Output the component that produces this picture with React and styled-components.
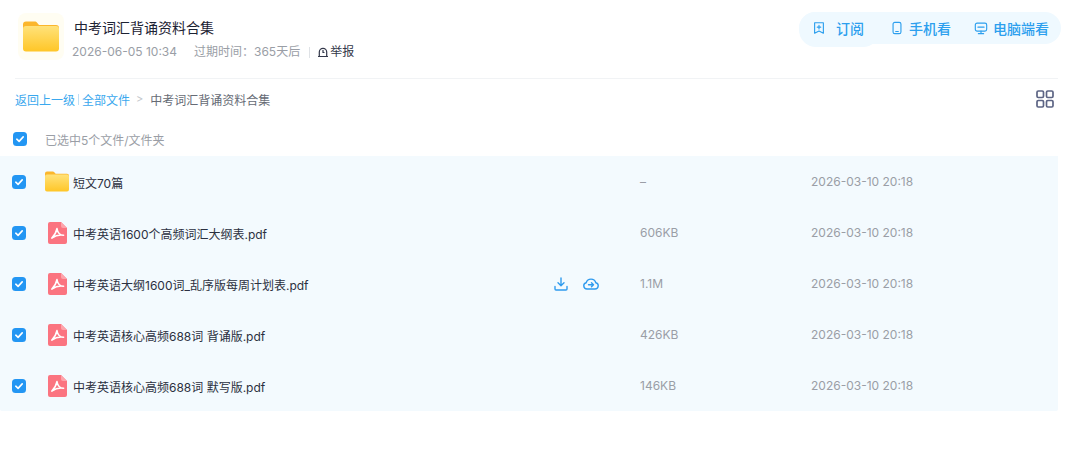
import React from "react";
import styled, { createGlobalStyle } from "styled-components";

const Global = createGlobalStyle`
  html, body { margin: 0; padding: 0; background: #fff; }
  body { font-family: Inter, "Noto Sans CJK SC", sans-serif; overflow: hidden; }
`;
const Page = styled.div`width: 1068px; height: 470px; display: flex; flex-direction: column;`;
const Header = styled.header`
  height: 79px; margin: 0 10px 0 15px; box-sizing: border-box; padding: 13px 0 0 3px;
  display: flex; align-items: flex-start; border-bottom: 1px solid #f1f3f5; position: relative;
`;
const FolderTile = styled.div`
  width: 46px; height: 47px; border-radius: 8px; background: #fffdf2;
  display: flex; align-items: center; justify-content: center; flex: none;
`;
const HeadText = styled.div`margin-left: 8px; display: flex; flex-direction: column;`;
const Title = styled.div`font-size: 14px; line-height: 20px; color: #1c2233; margin: 5px 0 0 0; padding-left: 2px;`;
const Meta = styled.div`display: flex; align-items: center; font-size: 12px; line-height: 18px; color: #9a9ea6; margin-top: 5px;`;
const Expire = styled.span`margin-left: 17px;`;
const MetaRule = styled.span`width: 1px; height: 11px; background: #dfe2e6; margin: 0 7px 0 9px;`;
const Report = styled.span`display: flex; align-items: center; gap: 1px; color: #33384a;`;
const Actions = styled.div`
  position: absolute; right: -3px; top: 12px; height: 32px; width: 262px; border-radius: 16px;
  background: #eff9ff; display: flex; align-items: center; color: #2c9fee; font-size: 14px;
  &::before {
    content: ""; position: absolute; left: 0; top: 0; width: 81px; height: 35px;
    border-radius: 17px; background: #eff9ff;
  }
`;
const Action = styled.div`
  position: relative; display: flex; align-items: center; gap: ${p => p.$gap}px;
  width: ${p => p.$w}px; padding-left: ${p => p.$pad}px; box-sizing: border-box; font-weight: 500;
  height: 14px; white-space: nowrap;
  & + &::before {
    content: ""; position: absolute; left: 0; top: 1px; width: 1px; height: 12px; background: #d8eaf6;
  }
`;
const Crumbs = styled.nav`
  display: flex; align-items: center; height: 18px; margin: 11px 0 0 15px; font-size: 12px; color: #666b75;
  padding-right: 15px;
`;
const CrumbLink = styled.a`color: #3aa8ee;`;
const CrumbBar = styled.span`width: 1px; height: 11px; background: #bfdff5; margin: 0 3px 0 3px;`;
const CrumbArrow = styled.span`color: #c4c7cc; margin: 0 7px 0 6px; font-size: 11px;`;
const GridBtn = styled.span`margin-left: auto; margin-right: -1px; display: flex;`;
const SelectAll = styled.div`
  display: flex; align-items: center; height: 18px; margin: 22px 0 0 13px; font-size: 12px; color: #9a9ea6;
`;
const SelectLabel = styled.span`margin-left: 18px;`;
const List = styled.div`width: 1058px; margin-top: 8px; background: #f3fafe; border-radius: 0 0 2px 2px;`;
const Row = styled.div`
  height: 51px; display: flex; align-items: center; padding-left: 12px; position: relative;
`;
const IconCell = styled.span`width: 30px; margin-left: 16px; display: flex; justify-content: center; flex: none;`;
const Name = styled.span`margin-left: 1px; width: 310px; white-space: nowrap; font-size: 12px; color: #2b3040; flex: none; padding-top: 2px;`;
const Tools = styled.span`width: 257px; display: flex; align-items: center; flex: none;`;
const ToolA = styled.span`margin-left: 171px; display: flex;`;
const ToolB = styled.span`margin-left: 15px; display: flex;`;
const Size = styled.span`width: 171px; font-size: 12px; color: #9a9ea6; flex: none;`;
const Time = styled.span`font-size: 12px; color: #9a9ea6;`;
const Box = styled.span`
  width: 14px; height: 14px; border-radius: 3.5px; background: #2396f3; display: flex;
  align-items: center; justify-content: center; flex: none;
`;

const Check = () => (
  <Box><svg width="10" height="10" viewBox="0 0 10 10" fill="none"><path d="M1.8 5.2 4.1 7.4 8.2 2.9" stroke="#fff" strokeWidth="1.6" strokeLinecap="round" strokeLinejoin="round"/></svg></Box>
);
const Folder = ({ w, h }) => (
  <svg width={w} height={h} viewBox="0 0 36 30">
    <defs>
      <linearGradient id="fg" x1="0" y1="0" x2="0" y2="1"><stop offset="0" stopColor="#ffe27a"/><stop offset="1" stopColor="#ffc627"/></linearGradient>
    </defs>
    <path d="M3 0h8.5c1.2 0 2 .5 2.8 1.4L16 3.5h17a3 3 0 0 1 3 3V10H0V3a3 3 0 0 1 3-3z" fill="#fbb62c"/>
    <path d="M0 7.5a3 3 0 0 1 3-3h30a3 3 0 0 1 3 3V27a3 3 0 0 1-3 3H3a3 3 0 0 1-3-3z" fill="url(#fg)"/>
  </svg>
);
const Pdf = () => (
  <svg width="19" height="22" viewBox="0 0 19 22">
    <path d="M2 0h11l6 6v14a2 2 0 0 1-2 2H2a2 2 0 0 1-2-2V2a2 2 0 0 1 2-2z" fill="#fb7480"/>
    <path d="M13 0l6 6h-4a2 2 0 0 1-2-2z" fill="#fda4ab"/>
    <path d="M9 6.5c-.6 2.8-2 6.6-5.2 9.6M9 6.5c.5 3.5 2.3 6.7 6.6 6.7M15.6 13.2c-4-.7-8 .2-11.8 2.9" fill="none" stroke="#fff" strokeWidth="1.5" strokeLinecap="round"/>
  </svg>
);
const Ic = ({ s = 14, children }) => (
  <svg width={s} height={s} viewBox="0 0 16 16" fill="none" stroke="currentColor" strokeWidth="1.3" strokeLinecap="round" strokeLinejoin="round">{children}</svg>
);

const files = [
  { name: "短文70篇", size: "–", folder: true },
  { name: "中考英语1600个高频词汇大纲表.pdf", size: "606KB" },
  { name: "中考英语大纲1600词_乱序版每周计划表.pdf", size: "1.1M", tools: true },
  { name: "中考英语核心高频688词 背诵版.pdf", size: "426KB" },
  { name: "中考英语核心高频688词 默写版.pdf", size: "146KB" },
];

export default function App() {
  return (
    <Page>
      <Global />
      <Header>
        <FolderTile><Folder w={36} h={31} /></FolderTile>
        <HeadText>
          <Title>中考词汇背诵资料合集</Title>
          <Meta>
            <span>2026-06-05 10:34</span>
            <Expire>过期时间：365天后</Expire>
            <MetaRule />
            <Report>
              <svg width="12" height="12" viewBox="0 0 12 12" fill="none" stroke="#33384a" strokeWidth="1.2"><path d="M1 10.5h10M2.3 10.5V6a3.7 3.7 0 0 1 7.4 0v4.5M6 4v2.5h1.5"/></svg>
              举报
            </Report>
          </Meta>
        </HeadText>
        <Actions>
          <Action $w={76} $pad={13} $gap={10}>
            <Ic><path d="M3 2h10v12l-5-2.5L3 14z"/><path d="M8 5v4M6 7h4"/></Ic>订阅
          </Action>
          <Action $w={86} $pad={15} $gap={5}>
            <Ic><rect x="3.5" y="1.5" width="9" height="13" rx="2"/><path d="M6.5 12h3"/></Ic>手机看
          </Action>
          <Action $w={100} $pad={13} $gap={5}>
            <Ic><rect x="1.5" y="2.5" width="13" height="9" rx="2"/><path d="M8 11.5v3M5 14.5h6M4.5 7h7"/></Ic>电脑端看
          </Action>
        </Actions>
      </Header>
      <Crumbs>
        <CrumbLink>返回上一级</CrumbLink>
        <CrumbBar />
        <CrumbLink>全部文件</CrumbLink>
        <CrumbArrow>&gt;</CrumbArrow>
        <span>中考词汇背诵资料合集</span>
        <GridBtn>
          <svg width="18" height="18" viewBox="0 0 18 18" fill="none" stroke="#5c6484" strokeWidth="1.7">
            <rect x="1" y="1" width="6.5" height="6.5" rx="1.3"/><rect x="10.5" y="1" width="6.5" height="6.5" rx="1.3"/>
            <rect x="1" y="10.5" width="6.5" height="6.5" rx="1.3"/><rect x="10.5" y="10.5" width="6.5" height="6.5" rx="1.3"/>
          </svg>
        </GridBtn>
      </Crumbs>
      <SelectAll><Check /><SelectLabel>已选中5个文件/文件夹</SelectLabel></SelectAll>
      <List>
        {files.map(f => (
          <Row key={f.name}>
            <Check />
            <IconCell>{f.folder ? <Folder w={24} h={21} /> : <Pdf />}</IconCell>
            <Name>{f.name}</Name>
            <Tools>
              {f.tools && (
                <span style={{ display: "contents", color: "#2f9bee" }}>
                  <ToolA>
                    <svg width="14" height="14" viewBox="0 0 14 14" fill="none" stroke="#2f9bee" strokeWidth="1.4" strokeLinecap="round" strokeLinejoin="round"><path d="M7 1v7.5M4 5.8 7 8.8l3-3M1 9.5V12a1 1 0 0 0 1 1h10a1 1 0 0 0 1-1V9.5"/></svg>
                  </ToolA>
                  <ToolB>
                    <svg width="16" height="13" viewBox="0 0 16 13" fill="none" stroke="#2f9bee" strokeWidth="1.4" strokeLinecap="round" strokeLinejoin="round"><path d="M4 12h8a3.2 3.2 0 0 0 .8-6.3A5 5 0 0 0 3.2 5.7 3.2 3.2 0 0 0 4 12zM5.5 7.8h5M8.5 5.8l2 2-2 2"/></svg>
                  </ToolB>
                </span>
              )}
            </Tools>
            <Size>{f.size}</Size>
            <Time>2026-03-10 20:18</Time>
          </Row>
        ))}
      </List>
    </Page>
  );
}
